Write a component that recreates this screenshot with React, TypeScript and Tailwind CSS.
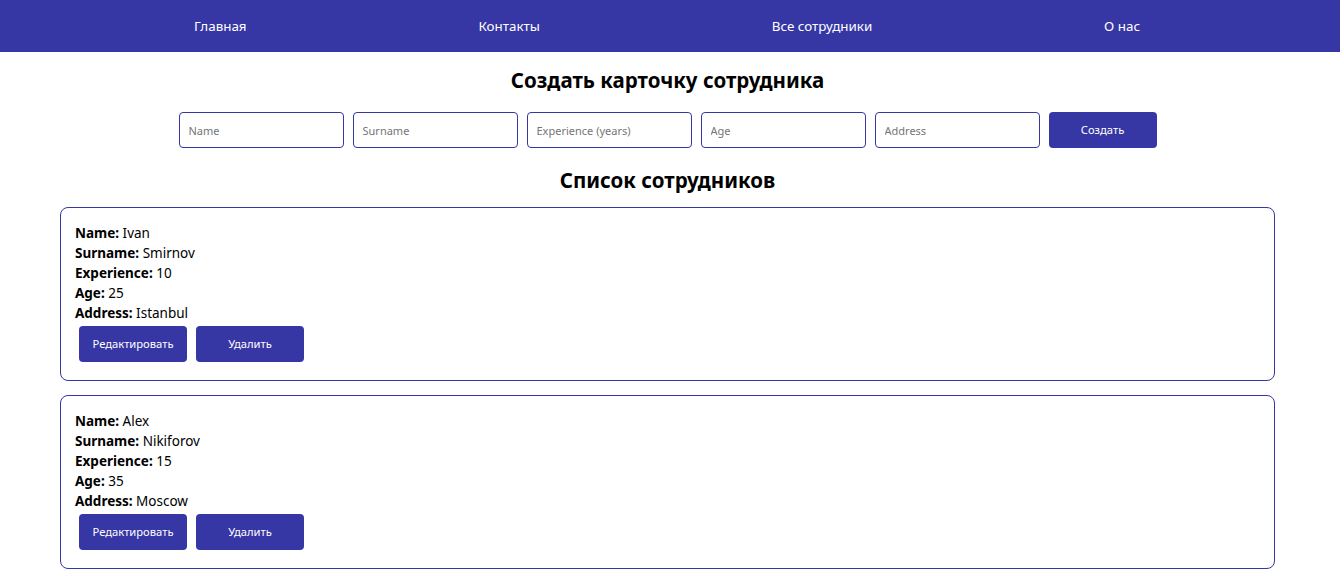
import React from "react";

const employees = [
  { name: "Ivan", surname: "Smirnov", experience: 10, age: 25, address: "Istanbul" },
  { name: "Alex", surname: "Nikiforov", experience: 15, age: 35, address: "Moscow" },
];

function Field({ label, value }: { label: string; value: string | number }) {
  return (
    <div className="h-[20px] leading-[20px] text-[13.5px] text-black">
      <span className="font-bold">{label}:</span> {value}
    </div>
  );
}

export default function App() {
  const placeholders = ["Name", "Surname", "Experience (years)", "Age", "Address"];
  return (
    <div className="bg-white min-h-[575px] w-[1340px] font-['Noto_Sans',sans-serif]">
      <nav className="h-[52px] bg-[#3636a5] flex items-center justify-around pl-[78px] pr-[84px] text-white text-[13.4px]">
        <a>Главная</a>
        <a>Контакты</a>
        <a>Все сотрудники</a>
        <a>О нас</a>
      </nav>
      <div className="w-[1335px] flex flex-col items-center">
        <h1 className="mt-[13px] h-[30px] leading-[30px] text-[20.5px] font-bold text-black">
          Создать карточку сотрудника
        </h1>
        <div className="mt-[17px] flex gap-[9px]">
          {placeholders.map((p) => (
            <input
              key={p}
              placeholder={p}
              className="w-[165px] h-[36px] border border-[#3636a5] rounded-[4px] px-[9px] text-[11px] placeholder:text-[#757575] outline-none"
            />
          ))}
          <button className="w-[108px] h-[36px] bg-[#3636a5] text-white rounded-[4px] text-[11.2px]">
            Создать
          </button>
        </div>
        <h2 className="mt-[17px] h-[30px] leading-[30px] text-[20.5px] font-bold text-black">
          Список сотрудников
        </h2>
        <div className="mt-[12px] w-full px-[60px] flex flex-col gap-[14px]">
          {employees.map((e) => (
            <div
              key={e.name}
              className="border border-[#3636a5] rounded-[8px] pt-[15px] pb-[18px] px-[14px]"
            >
              <Field label="Name" value={e.name} />
              <Field label="Surname" value={e.surname} />
              <Field label="Experience" value={e.experience} />
              <Field label="Age" value={e.age} />
              <Field label="Address" value={e.address} />
              <div className="mt-[3px] ml-[4px] flex gap-[9px]">
                <button className="w-[108px] h-[36px] bg-[#3636a5] text-white rounded-[4px] text-[11.2px]">
                  Редактировать
                </button>
                <button className="w-[108px] h-[36px] bg-[#3636a5] text-white rounded-[4px] text-[11.2px]">
                  Удалить
                </button>
              </div>
            </div>
          ))}
        </div>
      </div>
    </div>
  );
}
